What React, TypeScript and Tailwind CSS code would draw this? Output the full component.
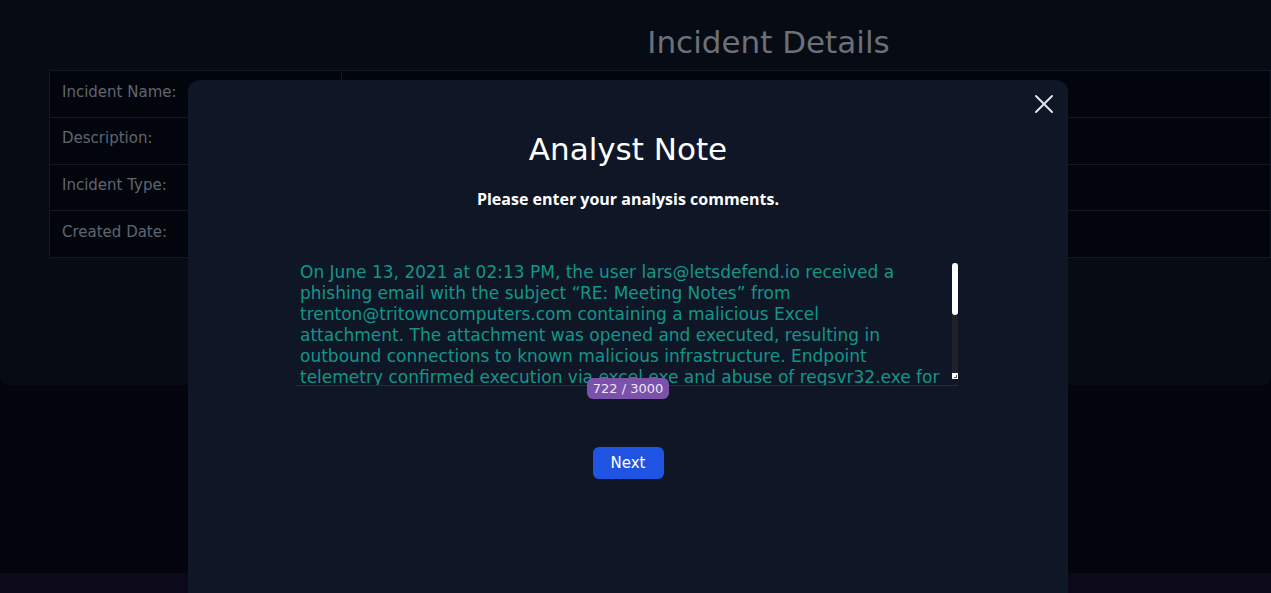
import { X } from 'lucide-react';

const NOTE = `On June 13, 2021 at 02:13 PM, the user lars@letsdefend.io received a
phishing email with the subject “RE: Meeting Notes” from
trenton@tritowncomputers.com containing a malicious Excel
attachment. The attachment was opened and executed, resulting in
outbound connections to known malicious infrastructure. Endpoint
telemetry confirmed execution via excel.exe and abuse of regsvr32.exe for
loading a remote payload. The sender address and attachment hash were
both flagged by threat intelligence, so this alert is a True Positive.
The host was contained and the email was removed from the mailbox.`;

const rows = ['Incident Name:', 'Description:', 'Incident Type:', 'Created Date:'];

function App() {
  return (
    <div className="relative h-[593px] overflow-hidden bg-[#03040c] font-['DejaVu_Sans',sans-serif]">
      <div className="flex h-full flex-col">
        {/* Incident details card */}
        <div className="h-[385px] rounded-b-lg bg-[#070b14] pt-[2px]">
          <h1 className="pl-[266px] pt-[22px] text-center text-[31px] leading-[36px] text-[#6c7079]">
            Incident Details
          </h1>
          <table className="ml-[49px] mt-[10px] w-[calc(100%-49px)] border-collapse bg-[#03050c]">
            <tbody>
              {rows.map((label) => (
                <tr key={label} className="h-[46.75px] border border-[#131824]">
                  <td className="w-[292px] border-r border-[#131824] pb-[4px] pl-[12px] text-[15px] text-[#5f6571]">
                    {label}
                  </td>
                  <td></td>
                </tr>
              ))}
            </tbody>
          </table>
        </div>
        <div className="flex-1" />
        <div className="h-[20px] bg-[#0c0a1a]" />
      </div>

      {/* Analyst note modal */}
      <div className="absolute left-[188px] top-[80px] flex h-[540px] w-[880px] flex-col items-center rounded-t-xl bg-[#0f1726]">
        <button className="absolute right-[8px] top-[8px] text-[#e5e7eb]">
          <X size={32} strokeWidth={1.4} />
        </button>
        <h2 className="mt-[51px] text-[31px] leading-[36px] text-white">Analyst Note</h2>
        <p className="mt-[22px] font-['Open_Sans',sans-serif] text-[16px] font-bold leading-[20px] text-white">
          Please enter your analysis comments.
        </p>
        <div className="relative mt-[51px] ml-[108px] self-start">
          <textarea
            defaultValue={NOTE}
            className="block h-[126px] w-[662px] resize-none border-b border-[#262a44] bg-transparent pl-[4px] pr-[10px] pt-[2px] text-[17px] leading-[21px] text-[#12968a] outline-none [scrollbar-width:none]"
          />
          {/* scrollbar + resize grip */}
          <div className="absolute right-0 top-[3px] flex h-[116px] w-[6px] flex-col bg-[#221f2a]">
            <div className="h-[52px] rounded-full bg-white" />
            <div className="flex-1" />
            <div className="relative h-[6px] bg-white">
              <div className="absolute bottom-[1px] right-[1px] h-[3px] w-[3px] border-b border-r border-[#555]" />
            </div>
          </div>
        </div>
        <span className="relative z-10 -mt-[8px] rounded-md bg-[#7b52ab] px-[6px] text-[13px] leading-[21px] text-[#ece6f7]">
          722 / 3000
        </span>
        <button className="mt-[48px] h-[32px] w-[71px] rounded-md bg-[#1f54e3] text-[15px] text-white">
          Next
        </button>
      </div>
    </div>
  );
}

export default App;
